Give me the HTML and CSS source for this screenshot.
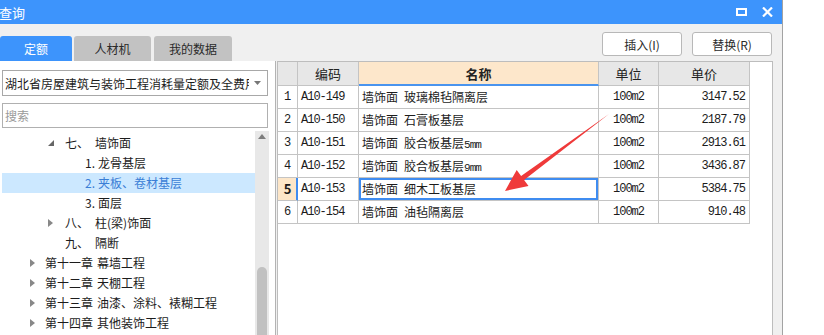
FILE: index.html
```html
<!DOCTYPE html>
<html lang="zh-CN">
  <head>
    <meta charset="UTF-8" />
    <title>查询</title>
    <link rel="stylesheet" href="styles.css">
  </head>
  <body>
    <div class="window">
      <div class="titlebar">
        <span class="title">查询</span>
        <div class="win_icons">
          <svg width="11" height="10" viewBox="0 0 11 10"><rect x="1" y="2" width="9" height="6" fill="none" stroke="#fff" stroke-width="2"/></svg>
          <svg width="11" height="10" viewBox="0 0 11 10"><path d="M1 0.5 L10 9.5 M10 0.5 L1 9.5" stroke="#fff" stroke-width="2.2"/></svg>
        </div>
      </div>

      <div class="toolbar">
        <div class="tabs">
          <div class="tab active">定额</div>
          <div class="tab t2">人材机</div>
          <div class="tab t3">我的数据</div>
        </div>
        <div class="actions">
          <button class="btn">插入(I)</button>
          <button class="btn">替换(R)</button>
        </div>
      </div>

      <div class="main">
        <div class="left">
          <div class="select">
            <span class="select_text">湖北省房屋建筑与装饰工程消耗量定额及全费用</span>
            <svg class="select_arrow" width="7" height="4" viewBox="0 0 7 4"><path d="M0 0 H7 L3.5 4 Z" fill="#777"/></svg>
          </div>
          <div class="search">搜索</div>

          <div class="tree">
            <div class="tree_list">
              <div class="node lv2"><span class="tog"><svg width="6" height="6" viewBox="0 0 6 6"><path d="M6 0 V6 H0 Z" fill="#666"/></svg></span><span class="num">七、</span>墙饰面</div>
              <div class="node lv3"><span class="tog"></span><span class="dot">1.</span>龙骨基层</div>
              <div class="node lv3 selected"><span class="tog"></span><span class="dot">2.</span>夹板、卷材基层</div>
              <div class="node lv3"><span class="tog"></span><span class="dot">3.</span>面层</div>
              <div class="node lv2"><span class="tog"><svg width="5" height="8" viewBox="0 0 5 8"><path d="M0 0 L5 4 L0 8 Z" fill="#888"/></svg></span><span class="num">八、</span>柱(梁)饰面</div>
              <div class="node lv2"><span class="tog"></span><span class="num">九、</span>隔断</div>
              <div class="node lv1"><span class="tog"><svg width="5" height="8" viewBox="0 0 5 8"><path d="M0 0 L5 4 L0 8 Z" fill="#888"/></svg></span><span class="chap">第十一章</span>幕墙工程</div>
              <div class="node lv1"><span class="tog"><svg width="5" height="8" viewBox="0 0 5 8"><path d="M0 0 L5 4 L0 8 Z" fill="#888"/></svg></span><span class="chap">第十二章</span>天棚工程</div>
              <div class="node lv1"><span class="tog"><svg width="5" height="8" viewBox="0 0 5 8"><path d="M0 0 L5 4 L0 8 Z" fill="#888"/></svg></span><span class="chap">第十三章</span>油漆、涂料、裱糊工程</div>
              <div class="node lv1"><span class="tog"><svg width="5" height="8" viewBox="0 0 5 8"><path d="M0 0 L5 4 L0 8 Z" fill="#888"/></svg></span><span class="chap">第十四章</span>其他装饰工程</div>
            </div>
            <div class="scrollbar">
              <svg class="scroll_up" width="8" height="5" viewBox="0 0 8 5"><path d="M0 5 L4 0 L8 5 Z" fill="#7d7d7d"/></svg>
              <div class="thumb"></div>
            </div>
          </div>
        </div>

        <div class="gap"></div>

        <div class="table_panel">
          <div class="grid">
            <div class="cell head"></div>
            <div class="cell head">编码</div>
            <div class="cell head name_head">名称</div>
            <div class="cell head">单位</div>
            <div class="cell head">单价</div>

            <div class="cell rn">1</div>
            <div class="cell code">A10-149</div>
            <div class="cell name"><span class="cat">墙饰面</span>玻璃棉毡隔离层</div>
            <div class="cell unit">100m2</div>
            <div class="cell price">3147.52</div>

            <div class="cell rn">2</div>
            <div class="cell code">A10-150</div>
            <div class="cell name"><span class="cat">墙饰面</span>石膏板基层</div>
            <div class="cell unit">100m2</div>
            <div class="cell price">2187.79</div>

            <div class="cell rn">3</div>
            <div class="cell code">A10-151</div>
            <div class="cell name"><span class="cat">墙饰面</span>胶合板基层<span class="mm">5mm</span></div>
            <div class="cell unit">100m2</div>
            <div class="cell price">2913.61</div>

            <div class="cell rn">4</div>
            <div class="cell code">A10-152</div>
            <div class="cell name"><span class="cat">墙饰面</span>胶合板基层<span class="mm">9mm</span></div>
            <div class="cell unit">100m2</div>
            <div class="cell price">3436.87</div>

            <div class="cell rn current">5</div>
            <div class="cell code">A10-153</div>
            <div class="cell name focused"><span class="cat">墙饰面</span>细木工板基层</div>
            <div class="cell unit">100m2</div>
            <div class="cell price">5384.75</div>

            <div class="cell rn">6</div>
            <div class="cell code">A10-154</div>
            <div class="cell name"><span class="cat">墙饰面</span>油毡隔离层</div>
            <div class="cell unit">100m2</div>
            <div class="cell price">910.48</div>
          </div>
        </div>
      </div>

      <!-- annotation arrow drawn over the screenshot -->
      <svg class="arrow" width="824" height="335" viewBox="0 0 824 335">
        <polygon points="609,114 524.1,180 528.5,186 505,191 516.7,170 521.1,176" fill="#ef3a3a"/>
      </svg>
    </div>
  </body>
</html>
```

FILE: styles.css
```css
body {
  margin: 0;
  background: #ffffff;
  font-family: "Noto Sans CJK SC", "Microsoft YaHei", sans-serif;
  font-size: 12px;
  color: #1c1c1c;
}

.window {
  position: relative;
  width: 782px;
  height: 335px;
  border-right: 1px solid #a3a3a3;
  background: #f0f0f0;
  overflow: hidden;
}

.titlebar {
  height: 24px;
  background: #3d94fc;
  color: #ffffff;
  display: flex;
  align-items: center;
  justify-content: space-between;
  padding-right: 9px;
}

.title {
  font-size: 13px;
  margin-left: -1px;
}

.win_icons {
  display: flex;
  gap: 15px;
  align-items: center;
}

.toolbar {
  height: 37px;
  display: flex;
  justify-content: space-between;
  padding-right: 10px;
}

.tabs {
  align-self: flex-end;
  display: flex;
  gap: 2px;
}

.tab {
  height: 25px;
  line-height: 25px;
  text-align: center;
  background: #c2c2c2;
  color: #2a2a2a;
  border-radius: 3px 3px 0 0;
  width: 77px;
}

.tab.active {
  width: 72px;
  background: #3d94fc;
  color: #ffffff;
}

.tab.t3 {
  width: 78px;
  margin-left: 1px;
}

.actions {
  display: flex;
  gap: 10px;
  padding-top: 8px;
}

.btn {
  height: 24px;
  width: 80px;
  background: #ffffff;
  border: 1px solid #b8b8b8;
  border-radius: 3px;
  font-family: inherit;
  font-size: 12px;
  color: #2a2a2a;
  padding: 0;
}

.main {
  display: flex;
  height: 274px;
}

/* left side: dropdown, search and tree */
.left {
  width: 266px;
  background: #ffffff;
  border-right: 1px solid #b3b3b3;
  padding: 9px 7px 0 2px;
}

.select {
  height: 26px;
  box-sizing: border-box;
  border: 1px solid #a8a8a8;
  display: flex;
  align-items: center;
  padding: 0 6px 0 2px;
}

.select_text {
  flex: 1;
  white-space: nowrap;
  overflow: hidden;
  margin-right: 5px;
}

.search {
  margin-top: 7px;
  height: 25px;
  line-height: 23px;
  box-sizing: border-box;
  border: 1px solid #b0b0b0;
  color: #9a9a9a;
  padding-left: 2px;
}

.tree {
  margin-top: 3px;
  margin-right: -1px;
  height: 204px;
  display: flex;
  overflow: hidden;
}

.tree_list {
  flex: 1;
  padding-top: 2px;
}

.node {
  height: 20px;
  line-height: 20px;
  display: flex;
  align-items: center;
  white-space: nowrap;
}

.node.lv1 { padding-left: 28px; }
.node.lv2 { padding-left: 46px; }
.node.lv3 { padding-left: 68px; }

.tog {
  width: 15px;
  display: flex;
  align-items: center;
}

.node.lv2 .tog {
  width: 17px;
}

.num {
  margin-right: 6px;
}

.dot {
  margin-right: 3px;
}

.chap {
  margin-right: 4px;
}

.node.selected {
  background: #cce8ff;
  color: #3a7ed6;
}

.scrollbar {
  width: 14px;
  background: #e8e8e8;
  display: flex;
  flex-direction: column;
  align-items: center;
}

.scroll_up {
  margin-top: 3px;
}

.thumb {
  margin-top: 128px;
  width: 10px;
  flex: 1;
  background: #c1c1c1;
  border-radius: 5px 5px 0 0;
}

.gap {
  width: 1px;
}

/* right side: result grid */
.table_panel {
  width: 494px;
  background: #ffffff;
  border: 1px solid #bdbdbd;
  border-bottom: none;
}

.grid {
  display: grid;
  grid-template-columns: 20px 61px 240px 60px 91px;
  width: max-content;
}

.cell {
  box-sizing: border-box;
  height: 23px;
  line-height: 22px;
  border-right: 1px solid #c4c4c4;
  border-bottom: 1px solid #c4c4c4;
  white-space: nowrap;
  overflow: hidden;
}

.cell.head {
  height: 24px;
  line-height: 23px;
  background: #e7e7e7;
  text-align: center;
  font-size: 13px;
  color: #222;
}

.cell.name_head {
  background: #fde7cb;
  font-weight: bold;
  border-bottom: 2px solid #4a94ee;
}

.rn,
.code,
.unit,
.price,
.mm {
  font-family: "Liberation Mono", monospace;
  letter-spacing: -1px;
}

.rn {
  text-align: center;
  letter-spacing: 0;
}

.rn.current {
  background: #fde6c8;
  font-family: "Noto Sans CJK SC", sans-serif;
  font-weight: bold;
  font-size: 13px;
  border-right-color: #3f8cf0;
  box-shadow: inset -1px 0 #3f8cf0;
}

.code {
  padding-left: 3px;
}

.name {
  padding-left: 3px;
}

.cat {
  margin-right: 6px;
}

.mm {
  font-size: 11px;
}

.name.focused {
  box-shadow: inset 0 0 0 2px #3f8cf0;
}

.unit {
  text-align: center;
}

.price {
  text-align: right;
  padding-right: 4px;
}

.arrow {
  position: absolute;
  top: 0;
  left: 0;
  pointer-events: none;
}
```
